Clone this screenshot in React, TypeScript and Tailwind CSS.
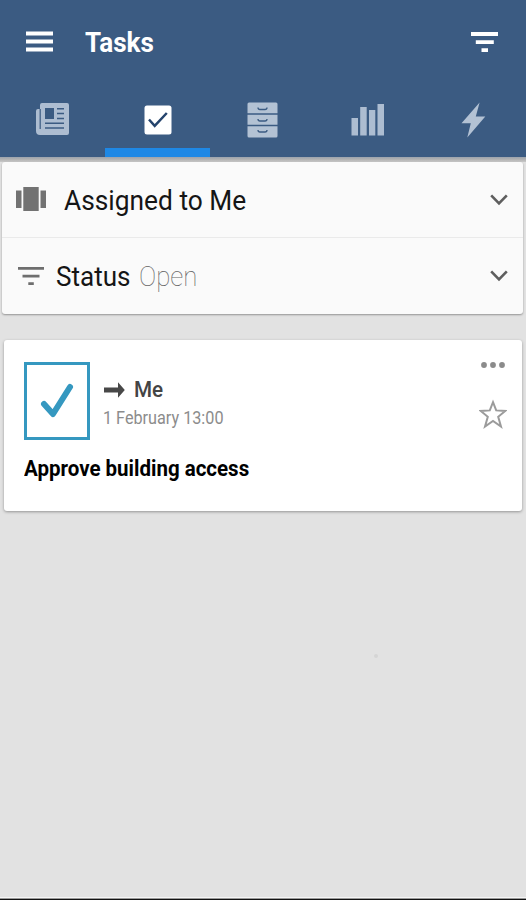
import React from "react";

type IconProps = { className?: string };

function MenuIcon({ className }: IconProps) {
  return (
    <svg className={className} viewBox="0 0 27 22" fill="#fff">
      <path d="M0 .5h27v4H0zM0 8.5h27v4H0zM0 16.5h27v4H0z" />
    </svg>
  );
}

function FilterIcon({ className }: IconProps) {
  return (
    <svg className={className} viewBox="0 0 27 20" fill="currentColor">
      <path d="M0 0h27v4H0zM4.8 8.2h18v3.7h-18zM10.5 16.2h6.5V20h-6.5z" />
    </svg>
  );
}

function StatusIcon() {
  return (
    <svg className="h-[18px] w-[26px]" viewBox="0 0 26 18" fill="#6e6e6e">
      <path d="M0 0h26v2.7H0zM4.5 7.8h17v2.7h-17zM10.3 15.3h5.5V18h-5.5z" />
    </svg>
  );
}

function NewsIcon() {
  return (
    <svg className="h-[34px] w-[34px]" viewBox="0 0 34 34" fill="#adbdd1">
      <path d="M7 1h25q2 0 2 2v28q0 2-2 2H5q-4 0-4-4V9q0-2 2-2h2V3q0-2 2-2Z" />
      <path d="M5.2 7v20" stroke="#3b5b82" strokeWidth="1.2" />
      <path d="M10 6h9v11h-9z" fill="#3b5b82" />
      <path d="M22 6.8h7M22 11.6h7M22 16.4h7M10 21.3h19M10 26h19" stroke="#3b5b82" strokeWidth="1.5" />
    </svg>
  );
}

function TaskIcon() {
  return (
    <svg className="h-[30px] w-[28px]" viewBox="0 0 28 30">
      <rect x="0.5" y="0.5" width="27" height="29" rx="2.5" fill="#fff" />
      <path d="m5 14.5 5.7 6.3L22.8 8" fill="none" stroke="#25446d" strokeWidth="2.5" />
    </svg>
  );
}

function CabinetIcon() {
  return (
    <svg className="h-[36px] w-[31px]" viewBox="0 0 31 36">
      <rect x="0.5" y="0.5" width="30" height="35" rx="1.5" fill="#b3c2d4" />
      <path d="M0 12h31M0 23.5h31" stroke="#3b5b82" strokeWidth="1.3" />
      <path d="M11 5.5q0 2 2 2h5q2 0 2-2M11 17q0 2 2 2h5q2 0 2-2M11 28q0 2 2 2h5q2 0 2-2" fill="none" stroke="#3b5b82" strokeWidth="1.3" />
    </svg>
  );
}

function BarsIcon() {
  return (
    <svg className="h-[33px] w-[34px]" viewBox="0 0 34 33" fill="#adbdd1">
      <path d="M.5 15h6.5v17.5H.5zM9.2 4h6.5v28.5H9.2zM18 7h6.3v25.5H18zM26.5 1H33v31.5h-6.5z" />
    </svg>
  );
}

function BoltIcon() {
  return (
    <svg className="h-[36px] w-[25px]" viewBox="0 0 25 36" fill="#b3c2d4">
      <path d="M18.6.5 14.8 14.5h9.5L6.3 35.5l3.5-14.3H.5z" />
    </svg>
  );
}

function CarouselIcon() {
  return (
    <svg className="mb-[2px] h-[24px] w-[30px]" viewBox="0 0 30 24" fill="#727272">
      <path d="M0 3.5h5.5V21H0zM7.3 0h15.4v24H7.3zM24.5 3.5H30V21h-5.5z" />
    </svg>
  );
}

function ChevronIcon() {
  return (
    <svg className="h-[12px] w-[18px]" viewBox="0 0 18 12" fill="none" stroke="#5e5e5e" strokeWidth="2.6">
      <path d="m1.2 1.3 7.8 8 7.8-8" />
    </svg>
  );
}

function ArrowIcon() {
  return (
    <svg className="h-[16px] w-[22px]" viewBox="0 0 22 16" fill="#484848">
      <path d="M1 5.6h14V.2l6.8 7.8-6.8 7.8v-5.4H1z" />
    </svg>
  );
}

function StarIcon() {
  return (
    <svg className="h-[30px] w-[28px]" viewBox="0 0 28 30" fill="none" stroke="#9b9b9b" strokeWidth="2">
      <path d="m14 3.2 3.2 8.2 9 .5-7 5.9 2.8 9.7-8-5.5-8 5.5 2.8-9.7-7-5.9 9-.5z" />
    </svg>
  );
}

function FilterRow({ children }: { children: React.ReactNode }) {
  return (
    <div className="flex h-[76px] items-center justify-between pl-[14px] pr-[15px]">
      <div className="flex items-center">{children}</div>
      <ChevronIcon />
    </div>
  );
}

export default function App() {
  return (
    <div className="flex h-[900px] w-[526px] flex-col overflow-hidden bg-[#e2e2e2] font-['Roboto',sans-serif]">
      <header className="h-[157px] shrink-0 bg-[#3b5b82] text-white">
        <div className="flex h-[84px] items-center pl-[26px] pr-[28px]">
          <MenuIcon className="h-[22px] w-[27px]" />
          <h1 className="mt-[2px] ml-8 flex-1 origin-left scale-x-[0.93] text-[28px] leading-8 font-bold">Tasks</h1>
          <FilterIcon className="h-[20px] w-[27px]" />
        </div>
        <nav className="grid h-[73px] grid-cols-5">
          <div className="flex justify-center pt-[18px] pr-[2px]"><NewsIcon /></div>
          <div className="flex justify-center border-b-[9px] border-[#1e88e5] pt-[21px]"><TaskIcon /></div>
          <div className="flex justify-center pt-[18px]"><CabinetIcon /></div>
          <div className="flex justify-center pt-[19px]"><BarsIcon /></div>
          <div className="flex justify-center pt-[18px] pl-[1px]"><BoltIcon /></div>
        </nav>
      </header>
      <div className="h-[5px] shrink-0 bg-linear-to-b from-[#9ba3ad] via-[#b3b3b3] to-[#c9c9c9]" />
      <section className="mr-[3px] ml-[2px] h-[152px] shrink-0 divide-y divide-[#eaeaea] rounded-[3px] bg-[#fafafa] shadow-[0_1px_2px_rgba(0,0,0,0.35)]">
        <FilterRow>
          <CarouselIcon />
          <span className="mt-[2px] ml-[18px] origin-left scale-x-[0.975] text-[27px] leading-8 text-[#151515]">Assigned to Me</span>
        </FilterRow>
        <FilterRow>
          <div className="ml-[2px]"><StatusIcon /></div>
          <span className="mt-[2px] ml-3 w-[83px] origin-left scale-x-[0.965] text-[27px] leading-8 text-[#151515]">Status</span>
          <span className="mt-[2px] origin-left scale-x-[0.955] text-[27px] leading-8 font-thin text-[#666]">Open</span>
        </FilterRow>
      </section>
      <article className="mt-[26px] mr-[4px] ml-[4px] flex h-[171px] shrink-0 justify-between rounded-[3px] bg-white pt-[22px] pr-[15px] pl-[20px] shadow-[0_1px_3px_rgba(0,0,0,0.35)]">
        <div>
          <div className="flex">
            <div className="flex h-[78px] w-[66px] items-center justify-center border-[3px] border-[#3598c0]">
              <svg className="h-[36px] w-[34px]" viewBox="0 0 34 36" fill="none" stroke="#3598c0" strokeWidth="6" strokeLinecap="round" strokeLinejoin="round">
                <path d="m4 21 9 10L30 4" />
              </svg>
            </div>
            <div className="ml-[13px] pt-[15px]">
              <div className="flex h-[26px] items-center">
                <ArrowIcon />
                <span className="ml-[9px] origin-left scale-x-[0.94] text-[22px] leading-[26px] font-medium text-[#444]">Me</span>
              </div>
              <div className="mt-[5px] w-[150px] origin-left scale-x-[0.9] text-[18px] leading-5 text-[#8c8c8c]">1 February 13:00</div>
            </div>
          </div>
          <h2 className="mt-[15px] origin-left scale-x-[0.932] text-[22px] leading-7 font-bold whitespace-nowrap text-black">Approve building access</h2>
        </div>
        <div className="flex flex-col items-center">
          <svg className="-mt-px h-[8px] w-[24px]" viewBox="0 0 24 8" fill="#8b8b8b">
            <circle cx="3" cy="4" r="2.9" />
            <circle cx="12" cy="4" r="2.9" />
            <circle cx="21" cy="4" r="2.9" />
          </svg>
          <div className="mt-[30px]"><StarIcon /></div>
        </div>
      </article>
      <div className="mt-[143px] ml-[374px] h-1 w-1 shrink-0 rounded-full bg-[#d5d5d5]" />
      <div className="mt-auto h-[3px] shrink-0 border-t border-b border-t-[#f5f5f5] border-b-[#111] bg-[#999]" />
    </div>
  );
}
